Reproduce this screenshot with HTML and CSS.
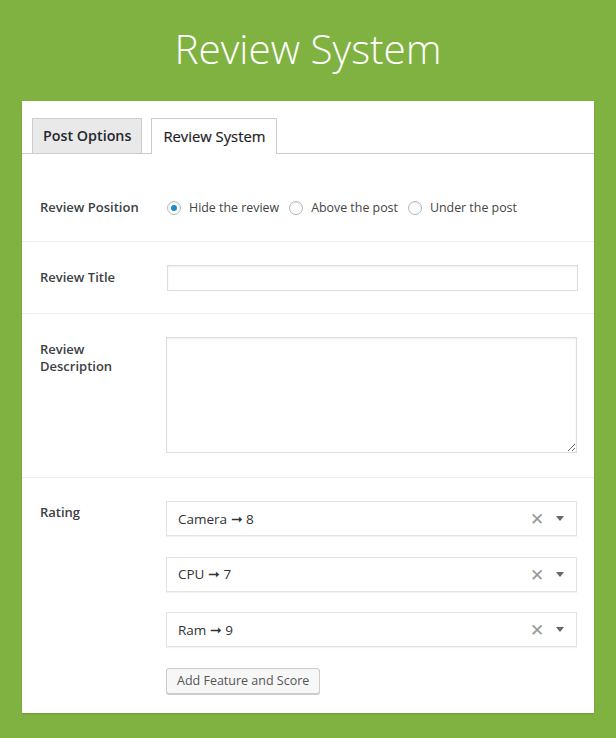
FILE: index.html
```html
<!DOCTYPE html>
<html lang="en">
<head>
  <meta charset="UTF-8" />
  <meta name="viewport" content="width=device-width, initial-scale=1.0"/>
  <title>Review System</title>
  <link rel="stylesheet" href="styles.css">
</head>
<body>

  <h1 class="titulo">Review System</h1>

  <div class="panel">
    <div class="tabs">
      <div class="tab">Post Options</div>
      <div class="tab activo">Review System</div>
    </div>

    <div class="fila fila-pos">
      <label class="etiqueta">Review Position</label>
      <div class="radios">
        <span class="radio marcado"></span><span class="opcion">Hide the review</span>
        <span class="radio"></span><span class="opcion">Above the post</span>
        <span class="radio"></span><span class="opcion">Under the post</span>
      </div>
    </div>

    <div class="fila fila-titulo">
      <label class="etiqueta">Review Title</label>
      <input type="text" class="campo">
    </div>

    <div class="fila fila-desc">
      <label class="etiqueta">Review<br>Description</label>
      <textarea class="area"></textarea>
    </div>

    <div class="fila fila-rating">
      <label class="etiqueta">Rating</label>
      <div class="selects">
        <div class="select"><span>Camera ➞ 8</span><span class="x">✕</span><span class="flecha"></span></div>
        <div class="select"><span>CPU ➞ 7</span><span class="x">✕</span><span class="flecha"></span></div>
        <div class="select"><span>Ram ➞ 9</span><span class="x">✕</span><span class="flecha"></span></div>
        <button class="boton">Add Feature and Score</button>
      </div>
    </div>
  </div>

</body>
</html>
```

FILE: styles.css
```css
body {
  margin: 0;
  background: #80b241;
  font-family: "Open Sans", Arial, sans-serif;
  color: #23282d;
  width: 616px;
  height: 738px;
  overflow: hidden;
}

.titulo {
  margin: 0;
  padding-top: 21px;
  height: 80px;
  box-sizing: border-box;
  text-align: center;
  color: white;
  font-weight: 300;
  font-size: 40.5px;
  line-height: 56px;
}

.panel {
  margin: 21px 22px 0 22px;
  background: white;
  height: 612px;
  box-shadow: 0 1px 2px rgba(0, 0, 0, 0.15);
}

.tabs {
  display: flex;
  padding: 17px 0 0 10px;
  gap: 9px;
  border-bottom: 1px solid #ccc;
  height: 35px;
}

.tab {
  border: 1px solid #ccc;
  border-bottom: none;
  background: #e9e9e9;
  font-size: 14.3px;
  font-weight: 600;
  padding: 0 10px;
  line-height: 34px;
  height: 35px;
  box-sizing: border-box;
}

.tab.activo {
  background: white;
  font-weight: 400;
  font-size: 14.8px;
  color: #1d2125;
  -webkit-text-stroke: 0.2px #1d2125;
  height: 36px;
  padding: 0 11px;
}

.fila {
  display: flex;
  border-bottom: 1px solid #eee;
  padding-left: 18px;
}

.etiqueta {
  width: 126px;
  font-size: 13px;
  font-weight: 600;
  color: #3c4146;
  line-height: 17px;
}

.fila-pos {
  height: 88px;
  align-items: flex-start;
  box-sizing: border-box;
  padding-top: 45px;
}

.radios {
  display: flex;
  align-items: center;
  font-size: 12.4px;
  color: #444;
  margin-left: 1px;
}

.radio {
  width: 14px;
  height: 14px;
  border: 1px solid #b4b9be;
  border-radius: 50%;
  box-sizing: border-box;
  margin-right: 8px;
  box-shadow: inset 0 1px 2px rgba(0, 0, 0, 0.1);
  display: flex;
  align-items: center;
  justify-content: center;
}

.radio.marcado::after {
  content: "";
  width: 6px;
  height: 6px;
  border-radius: 50%;
  background: #1e8cbe;
}

.opcion {
  margin-right: 10px;
}

.fila-titulo {
  height: 72px;
  box-sizing: border-box;
  align-items: center;
}

.fila-titulo .etiqueta {
  margin-top: -1px;
}

.campo {
  width: 411px;
  height: 26px;
  box-sizing: border-box;
  border: 1px solid #ddd;
  box-shadow: inset 0 1px 2px rgba(0, 0, 0, 0.07);
  margin: 0 0 0 1px;
}

.fila-desc {
  height: 164px;
  box-sizing: border-box;
  padding-top: 27px;
}

.area {
  width: 411px;
  height: 116px;
  box-sizing: border-box;
  border: 1px solid #ddd;
  box-shadow: inset 0 1px 2px rgba(0, 0, 0, 0.07);
  margin: -4px 0 0 0;
  resize: both;
}

.fila-rating {
  border-bottom: none;
  padding-top: 26px;
}

.selects {
  margin-top: -3px;
}

.select {
  width: 411px;
  height: 35px;
  box-sizing: border-box;
  border: 1px solid #e3e3e3;
  box-shadow: 0 1px 1px rgba(0, 0, 0, 0.05);
  display: flex;
  align-items: center;
  padding: 0 11px;
  font-size: 13.5px;
  color: #333;
  margin-bottom: 20.5px;
}

.select span:first-child {
  flex: 1;
}

.x {
  color: #999;
  font-size: 17px;
  margin-right: 12px;
}

.flecha {
  width: 0;
  height: 0;
  border-left: 4px solid transparent;
  border-right: 4px solid transparent;
  border-top: 5px solid #666;
  margin-right: 1px;
}

.boton {
  font-family: "Open Sans", Arial, sans-serif;
  font-size: 12.5px;
  color: #555;
  background: #f7f7f7;
  border: 1px solid #ccc;
  border-radius: 3px;
  box-shadow: 0 1px 0 #ccc;
  height: 26px;
  padding: 0 10px;
  margin-top: 0;
}
```
